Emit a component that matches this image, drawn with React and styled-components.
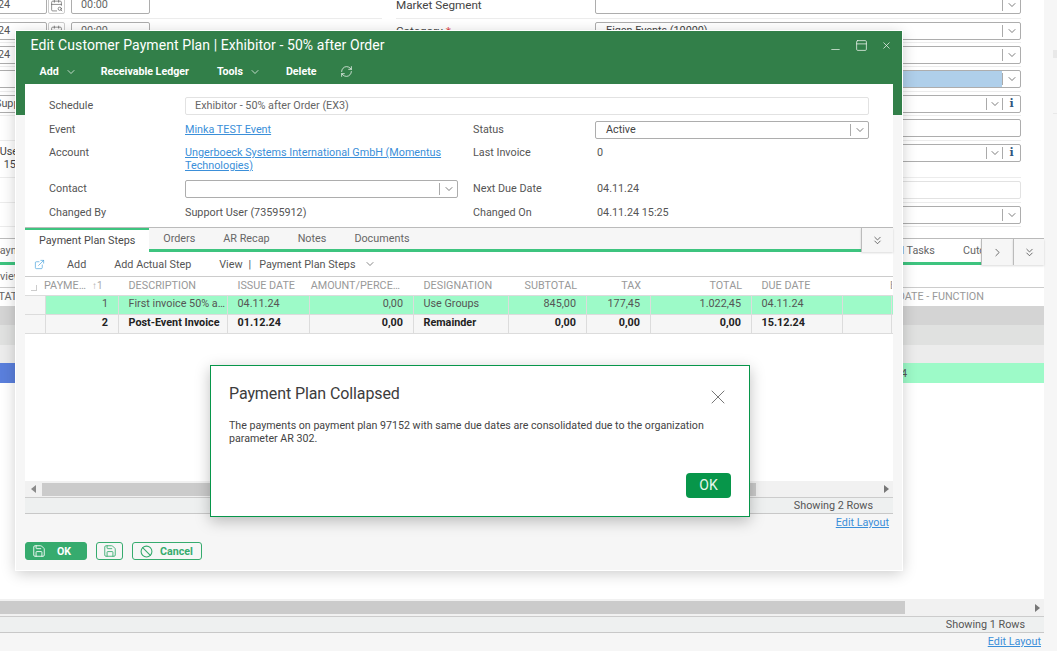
import React from 'react'
import styled, { createGlobalStyle } from 'styled-components'
import { Ban, CalendarSearch, ChevronDown, ChevronRight, ChevronsDown, ExternalLink, Minus, PanelTop, RefreshCw, Save, X } from 'lucide-react'

const GlobalStyle = createGlobalStyle`
  html, body { margin: 0; padding: 0; }
  body { font-family: Roboto, "Liberation Sans", sans-serif; font-size: 10.8px; color: #555; }
  * { box-sizing: border-box; }
`

const Page = styled.div`
  position: relative;
  width: 1057px;
  height: 651px;
  overflow: hidden;
  background: #f6f6f6;
`
const Main = styled.div`
  width: 1044px;
  height: 633px;
  background: #fff;
  display: flex;
  flex-direction: column;
`
const StripMark = styled.div`
  position: absolute;
  right: 0;
  top: ${p => p.$top}px;
  width: 4px;
  height: ${p => p.$h}px;
  background: #e8e8e8;
`
const Fields = styled.div`
  display: grid;
  grid-template-columns: 382px 625px;
  column-gap: 14px;
  margin-top: -7px;
`
const FieldCol = styled.div`
  display: flex;
  flex-direction: column;
`
const FieldRow = styled.div`
  display: flex;
  align-items: flex-start;
  height: ${p => p.$h}px;
  padding-top: 3px;
  border-bottom: 1px solid #ececec;
`
const FieldLabel = styled.div`
  width: 199px;
  flex: none;
  line-height: 18px;
  color: #444;
  font-size: 11.7px;
`
const Star = styled.span`
  color: #e04343;
  margin-left: 3px;
`
const Select = styled.div`
  flex: 1;
  height: 18px;
  display: flex;
  align-items: center;
  border: 1px solid ${p => (p.$muted ? '#e2e2e2' : '#adadad')};
  border-radius: 2px;
  background: #fff;
  color: #444;
  line-height: 16px;
`
const SelectValue = styled.div`
  flex: 1;
  align-self: stretch;
  padding-left: 10px;
  background: ${p => (p.$fill ? '#afcfea' : 'transparent')};
`
const SelectBtn = styled.div`
  width: ${p => p.$w || 18}px;
  height: 12px;
  flex: none;
  display: flex;
  align-items: center;
  justify-content: center;
  border-left: 1px solid #aaa;
  color: #444;
`
const InfoGlyph = styled.span`
  font-family: "DejaVu Serif", serif;
  font-weight: 700;
  font-size: 11px;
  line-height: 12px;
  color: #2e5680;
`
const DateBox = styled.div`
  width: 90px;
  margin-left: -43px;
  height: 18px;
  padding-left: 10px;
  border: 1px solid #adadad;
  border-radius: 2px;
  line-height: 16px;
  flex: none;
`
const CalBtn = styled.div`
  width: 17px;
  height: 18px;
  margin-left: 1px;
  border: 1px solid #ccc;
  border-radius: 2px;
  display: flex;
  align-items: center;
  justify-content: center;
  color: #555;
  flex: none;
`
const TimeBox = styled.div`
  width: 79px;
  height: 18px;
  margin-left: 6px;
  padding-left: 9px;
  border: 1px solid #adadad;
  border-radius: 2px;
  line-height: 16px;
  color: #666;
  flex: none;
`
const LeftBox = styled.div`
  width: 200px;
  height: 18px;
  margin-left: -16px;
  padding-left: 10px;
  border: 1px solid #adadad;
  border-radius: 2px;
  line-height: 16px;
  white-space: nowrap;
`
const LeftText = styled.div`
  margin-left: -45px;
  margin-top: 1px;
  line-height: 13px;
  white-space: nowrap;
  word-spacing: 4px;
  color: #444;
`
const BackTabs = styled.div`
  margin-top: 11px;
  height: 27px;
  display: flex;
  align-items: center;
  border-top: 1px solid #bbb;
`
const BackTabsBar = styled.div`
  flex: 1;
  height: 26px;
  display: flex;
  align-items: center;
  justify-content: space-between;
  border-bottom: 3px solid #3ec47f;
  overflow: hidden;
`
const BackTabText = styled.span`
  white-space: nowrap;
  margin-left: ${p => p.$ml || 0}px;
  color: #666;
`
const BackTabGroup = styled.div`
  display: flex;
  gap: 28px;
  margin-right: -12px;
`
const BackTabBtn = styled.div`
  width: ${p => p.$w}px;
  height: 26px;
  flex: none;
  display: flex;
  align-items: center;
  justify-content: center;
  background: #f6f6f6;
  border-left: 1px solid #bbb;
  box-shadow: 0 1px 2px rgba(0, 0, 0, 0.15);
  color: #444;
`
const BackTool = styled.div`
  height: 23px;
  display: flex;
  align-items: center;
  padding-left: 0;
  color: #666;
  border-bottom: 1px solid #ccc;
`
const BackToolText = styled.span`
  margin-left: -22px;
`
const BackHead = styled.div`
  height: 18px;
  display: flex;
  align-items: center;
  justify-content: space-between;
  color: #999;
  padding: 0 60px 2px 0;
`
const BackRow = styled.div`
  height: ${p => p.$h}px;
  background: ${p => p.$bg};
  display: flex;
  align-items: center;
`
const BackCell = styled.div`
  width: 15px;
  align-self: stretch;
  background: ${p => p.$bg};
`
const BackDate = styled.div`
  margin-left: 850px;
  white-space: nowrap;
  color: #555;
`
const Spacer = styled.div`
  flex: 1;
`
const ScrollTrack = styled.div`
  height: ${p => p.$h}px;
  display: flex;
  align-items: center;
  background: #f1f1f1;
  flex: none;
`
const ScrollThumb = styled.div`
  width: ${p => p.$w}px;
  height: 13px;
  margin-left: ${p => p.$ml || 0}px;
  background: #cbcbcb;
`
const ArrowLeft = styled.div`
  width: 0;
  height: 0;
  margin-left: 6px;
  border: 4px solid transparent;
  border-right: 5px solid #8a8a8a;
  border-left: 0;
`
const ArrowRight = styled.div`
  width: 0;
  height: 0;
  margin-left: auto;
  margin-right: ${p => p.$mr}px;
  border: 4px solid transparent;
  border-left: 5px solid #777;
  border-right: 0;
`
const GridFooter = styled.div`
  height: 17px;
  flex: none;
  display: flex;
  align-items: center;
  justify-content: flex-end;
  padding-right: ${p => p.$pr}px;
  background: #eef0f0;
  border-top: 1px solid #ccc;
  border-bottom: 1px solid #c8c8c8;
  color: #555;
`
const EditLink = styled.a`
  display: block;
  color: #3b8fd9;
  text-decoration: underline;
  text-align: right;
  line-height: 16px;
`
const PageLink = styled(EditLink)`
  width: 1041px;
  margin-top: 1px;
`
const Window = styled.div`
  position: absolute;
  left: 16px;
  top: 31px;
  width: 886px;
  height: 539px;
  display: flex;
  flex-direction: column;
  background: linear-gradient(#327f49 0 84px, #f6f6f6 84px);
  box-shadow: 0 0 0 1px #fff, 0 3px 14px rgba(0, 0, 0, 0.22);
`
const TitleBar = styled.div`
  height: 28px;
  flex: none;
  display: flex;
  align-items: center;
  padding: 0 10px 0 14.5px;
  color: #fff;
`
const Title = styled.div`
  flex: 1;
  font-size: 14px;
  letter-spacing: 0.08px;
`
const WinControls = styled.div`
  display: flex;
  align-items: center;
  gap: 13px;
  color: #f0f6f1;
`
const MinimizeIcon = styled(Minus)`
  margin-top: 9px;
`
const Toolbar = styled.div`
  height: 25px;
  flex: none;
  display: flex;
  align-items: center;
  padding-left: 23.5px;
  color: #fff;
  font-size: 10.67px;
`
const ToolItem = styled.div`
  display: flex;
  align-items: center;
  gap: ${p => p.$gap || 0}px;
  margin-right: ${p => p.$mr}px;
  font-weight: 700;
  white-space: nowrap;
`
const Panel = styled.div`
  height: 430px;
  flex: none;
  margin: 0 9px;
  display: flex;
  flex-direction: column;
  background: #fff;
`
const Form = styled.div`
  height: 143px;
  flex: none;
  padding: 13px 0 0 24px;
  display: grid;
  grid-template-columns: 136px 288px 122px 274px;
  grid-template-rows: 18px 18px 29px 18px 18px;
  row-gap: 6px;
  align-items: start;
  color: #555;
`
const Label = styled.div`
  line-height: ${p => p.$lh || 18}px;
  color: #555;
`
const Value = styled.div`
  line-height: ${p => p.$lh || 18}px;
  padding-left: ${p => p.$pl || 0}px;
`
const Link = styled.a`
  color: #3b8fd9;
  text-decoration: underline;
  line-height: 13px;
  display: block;
  margin-top: ${p => p.$mt || 0}px;
`
const WideInput = styled.div`
  grid-column: 2 / 5;
  height: 18px;
  padding-left: 9px;
  line-height: 16px;
  border: 1px solid #e2e2e2;
  border-radius: 2px;
  color: #666;
`
const ContactSelect = styled(Select)`
  width: 273px;
`
const Tabs = styled.div`
  height: 25px;
  flex: none;
  display: flex;
  background: #f6f6f6;
  border-top: 1px solid #bbb;
`
const Tab = styled.div`
  padding: 0 14px;
  line-height: 21px;
  white-space: nowrap;
  color: ${p => (p.$active ? '#4a4a4a' : '#666')};
  background: ${p => (p.$active ? '#fff' : 'transparent')};
  border-top: ${p => (p.$active ? '2px solid #3ec47f' : '0')};
  border-bottom: ${p => (p.$active ? '0' : '3px solid #3ec47f')};
`
const TabFill = styled.div`
  flex: 1;
  border-bottom: 3px solid #3ec47f;
`
const TabMore = styled.div`
  width: 32px;
  flex: none;
  display: flex;
  align-items: center;
  justify-content: center;
  border-left: 1px solid #bbb;
  box-shadow: 0 1px 2px rgba(0, 0, 0, 0.15);
  color: #444;
`
const GridTools = styled.div`
  height: 25px;
  flex: none;
  display: flex;
  align-items: center;
  padding-left: 9px;
  border-bottom: 1px solid #ccc;
  color: #555;
`
const GridTool = styled.span`
  margin-right: ${p => p.$mr}px;
  white-space: nowrap;
  color: ${p => (p.$link ? '#3b9bd9' : 'inherit')};
  display: flex;
  align-items: center;
`
const GridRow = styled.div`
  height: ${p => p.$h || 19}px;
  flex: none;
  display: grid;
  grid-template-columns: 18px 76px 109px 82px 104px 95px 78px 64px 101px 91px 49px;
  background: ${p => p.$bg || 'transparent'};
  font-weight: ${p => (p.$bold ? 700 : 400)};
  color: ${p => (p.$bold ? '#222' : '#555')};
  border-bottom: 1px solid #dcdcdc;
`
const Cell = styled.div`
  display: flex;
  align-items: center;
  justify-content: ${p => (p.$right ? 'flex-end' : 'flex-start')};
  padding: 0 ${p => p.$pr ?? 10}px 3px ${p => p.$pl ?? 9.5}px;
  white-space: nowrap;
  overflow: hidden;
  border-right: 1px solid #dcdcdc;
  background: ${p => p.$bg || 'transparent'};
`
const HeadCell = styled(Cell)`
  border-right: 0;
  color: #999;
  padding-bottom: 2px;
`
const CornerMark = styled.span`
  width: 6px;
  height: 6px;
  margin: 5px 0 0 6px;
  border-right: 1px solid #ccc;
  border-bottom: 1px solid #ccc;
`
const SortMark = styled.span`
  margin-left: 6px;
  color: #aaa;
  font-size: 10px;
`
const GridBody = styled.div`
  flex: 1;
`
const WinLink = styled(EditLink)`
  margin: 1px 0 0 9px;
  width: 864px;
`
const Buttons = styled.div`
  display: flex;
  gap: 9px;
  margin: 11px 0 0 9px;
`
const Button = styled.div`
  height: 18px;
  width: ${p => p.$w}px;
  display: flex;
  align-items: center;
  padding-left: ${p => p.$pl}px;
  gap: ${p => p.$gap || 0}px;
  border: 1px solid #36ab6e;
  border-radius: 3px;
  background: ${p => (p.$solid ? '#36ab6e' : 'transparent')};
  color: ${p => (p.$solid ? '#fff' : '#36ab6e')};
  font-weight: 700;
  font-size: 10.67px;
`
const Dialog = styled.div`
  position: absolute;
  left: 210px;
  top: 365px;
  width: 540px;
  height: 152px;
  display: flex;
  flex-direction: column;
  padding: 17px 18px 18px;
  background: #fff;
  border: 1px solid #07964a;
  box-shadow: 0 4px 14px rgba(0, 0, 0, 0.25);
`
const DialogHead = styled.div`
  height: 20px;
  display: flex;
  align-items: center;
  justify-content: space-between;
  flex: none;
`
const DialogTitle = styled.div`
  font-size: 16px;
  letter-spacing: -0.1px;
  color: #3c3c3c;
`
const DialogClose = styled.div`
  display: flex;
  margin: 8px 1px 0 0;
  color: #777;
`
const DialogText = styled.div`
  margin-top: 16px;
  font-size: 10.67px;
  line-height: 13px;
  color: #444;
  width: 490px;
`
const DialogOk = styled.div`
  margin: auto 0 0 auto;
  width: 45px;
  height: 25px;
  border-radius: 4px;
  background: #07964a;
  color: #e6f6ec;
  font-size: 14px;
  line-height: 24px;
  text-align: center;
`

const rightRows = [
  { h: 26, label: 'Market Segment', kind: 'select' },
  { h: 24, label: 'Category', required: true, value: 'Eigen Events (10000)', kind: 'select' },
  { h: 24, label: 'Sub Category', kind: 'select' },
  { h: 25, label: 'Status', kind: 'select', fill: true },
  { h: 24, label: 'Owner', kind: 'info' },
  { h: 25, label: 'Reference', kind: 'plain' },
  { h: 37, label: 'Contact', kind: 'info' },
  { h: 25, label: 'Changed By', kind: 'muted' },
  { h: 24, label: 'Type', kind: 'select' },
]

const leftRows = [
  { h: 26, kind: 'date' },
  { h: 24, kind: 'date' },
  { h: 24, kind: 'date' },
  { h: 25, kind: 'box', value: '' },
  { h: 24, kind: 'box', value: 'Support User' },
  { h: 25, kind: 'empty' },
  { h: 37, kind: 'text', lines: ['Support User (73595912)', '04.11.24 15:25'] },
  { h: 25, kind: 'empty' },
  { h: 24, kind: 'empty' },
]

const columns = [
  { label: 'DESCRIPTION' },
  { label: 'ISSUE DATE' },
  { label: 'AMOUNT/PERCE…', right: true, pr: 14 },
  { label: 'DESIGNATION' },
  { label: 'SUBTOTAL', right: true },
  { label: 'TAX', right: true },
  { label: 'TOTAL', right: true },
  { label: 'DUE DATE' },
]

const steps = [
  { no: 1, cells: ['First invoice 50% a…', '04.11.24', '0,00', 'Use Groups', '845,00', '177,45', '1.022,45', '04.11.24'], bg: '#9dfac8' },
  { no: 2, cells: ['Post-Event Invoice', '01.12.24', '0,00', 'Remainder', '0,00', '0,00', '0,00', '15.12.24'], bg: '#f6f6f6', bold: true },
]

const Chevron = () => <ChevronDown size={12} strokeWidth={1.4} />

const RightField = ({ row }) => (
  <FieldRow $h={row.h}>
    <FieldLabel>
      {row.label}
      {row.required && <Star>*</Star>}
    </FieldLabel>
    <Select $muted={row.kind === 'muted'}>
      <SelectValue $fill={row.fill}>{row.value}</SelectValue>
      {(row.kind === 'select' || row.kind === 'info') && (
        <SelectBtn $w={row.kind === 'info' ? 16 : 18}>
          <Chevron />
        </SelectBtn>
      )}
      {row.kind === 'info' && (
        <SelectBtn>
          <InfoGlyph>i</InfoGlyph>
        </SelectBtn>
      )}
    </Select>
  </FieldRow>
)

const LeftField = ({ row }) => (
  <FieldRow $h={row.h}>
    {row.kind === 'date' && (
      <>
        <DateBox>04.11.24</DateBox>
        <CalBtn>
          <CalendarSearch size={13} strokeWidth={1.2} />
        </CalBtn>
        <TimeBox>00:00</TimeBox>
      </>
    )}
    {row.kind === 'box' && <LeftBox>{row.value}</LeftBox>}
    {row.kind === 'text' && (
      <LeftText>
        {row.lines.map(line => (
          <div key={line}>{line}</div>
        ))}
      </LeftText>
    )}
  </FieldRow>
)

const App = () => {
  return (
    <Page>
      <GlobalStyle />
      <StripMark $top={50} $h={8} />
      <StripMark $top={113} $h={1} />
      <Main>
        <Fields>
          <FieldCol>
            {leftRows.map((row, i) => (
              <LeftField key={i} row={row} />
            ))}
          </FieldCol>
          <FieldCol>
            {rightRows.map(row => (
              <RightField key={row.label} row={row} />
            ))}
          </FieldCol>
        </Fields>
        <BackTabs>
          <BackTabsBar>
            <BackTabText $ml={-7}>Payment Plan Steps</BackTabText>
            <BackTabGroup>
              <BackTabText>All Tasks</BackTabText>
              <BackTabText>Cutoff</BackTabText>
            </BackTabGroup>
          </BackTabsBar>
          <BackTabBtn $w={32}>
            <ChevronRight size={13} strokeWidth={1.4} />
          </BackTabBtn>
          <BackTabBtn $w={31}>
            <ChevronsDown size={13} strokeWidth={1.4} />
          </BackTabBtn>
        </BackTabs>
        <BackTool>
          <BackToolText>Overview</BackToolText>
        </BackTool>
        <BackHead>
          <BackTabText $ml={-8}>STATUS</BackTabText>
          <span>DATE - FUNCTION</span>
        </BackHead>
        <BackRow $h={19} $bg="#d4d4d4" />
        <BackRow $h={20} $bg="#e0e1e0" />
        <BackRow $h={18} $bg="#ececec" />
        <BackRow $h={20} $bg="#9dfac8">
          <BackCell $bg="#5a7fdc" />
          <BackDate>04.11.24</BackDate>
        </BackRow>
        <Spacer />
        <ScrollTrack $h={17}>
          <ScrollThumb $w={905} />
          <ArrowRight $mr={4} />
        </ScrollTrack>
        <GridFooter $pr={19}>Showing 1 Rows</GridFooter>
      </Main>
      <PageLink>Edit Layout</PageLink>

      <Window>
        <TitleBar>
          <Title>Edit Customer Payment Plan | Exhibitor - 50% after Order</Title>
          <WinControls>
            <MinimizeIcon size={13} strokeWidth={1.3} />
            <PanelTop size={13} strokeWidth={1.4} />
            <X size={11} strokeWidth={1.6} />
          </WinControls>
        </TitleBar>
        <Toolbar>
          <ToolItem $mr={24} $gap={6}>
            Add <Chevron />
          </ToolItem>
          <ToolItem $mr={28}>Receivable Ledger</ToolItem>
          <ToolItem $mr={25} $gap={6}>
            Tools <Chevron />
          </ToolItem>
          <ToolItem $mr={23}>Delete</ToolItem>
          <RefreshCw size={13} strokeWidth={1.3} />
        </Toolbar>
        <Panel>
          <Form>
            <Label>Schedule</Label>
            <WideInput>Exhibitor - 50% after Order (EX3)</WideInput>
            <Label>Event</Label>
            <Value>
              <Link $mt={2}>Minka TEST Event</Link>
            </Value>
            <Label>Status</Label>
            <Select>
              <SelectValue>Active</SelectValue>
              <SelectBtn>
                <Chevron />
              </SelectBtn>
            </Select>
            <Label $lh={15}>Account</Label>
            <Value>
              <Link $mt={1}>Ungerboeck Systems International GmbH (Momentus Technologies)</Link>
            </Value>
            <Label $lh={15}>Last Invoice</Label>
            <Value $lh={15} $pl={2}>0</Value>
            <Label>Contact</Label>
            <ContactSelect>
              <SelectValue />
              <SelectBtn>
                <Chevron />
              </SelectBtn>
            </ContactSelect>
            <Label>Next Due Date</Label>
            <Value $pl={2}>04.11.24</Value>
            <Label>Changed By</Label>
            <Value>Support User (73595912)</Value>
            <Label>Changed On</Label>
            <Value $pl={2}>04.11.24 15:25</Value>
          </Form>
          <Tabs>
            <Tab $active>Payment Plan Steps</Tab>
            <Tab>Orders</Tab>
            <Tab>AR Recap</Tab>
            <Tab>Notes</Tab>
            <Tab>Documents</Tab>
            <TabFill />
            <TabMore>
              <ChevronsDown size={13} strokeWidth={1.4} />
            </TabMore>
          </Tabs>
          <GridTools>
            <GridTool $mr={22} $link>
              <ExternalLink size={11} strokeWidth={1.4} />
            </GridTool>
            <GridTool $mr={28}>Add</GridTool>
            <GridTool $mr={28}>Add Actual Step</GridTool>
            <GridTool $mr={6}>View</GridTool>
            <GridTool $mr={8}>|</GridTool>
            <GridTool $mr={8}>Payment Plan Steps</GridTool>
            <Chevron />
          </GridTools>
          <GridRow>
            <HeadCell $pl={0} $pr={0}>
              <CornerMark />
            </HeadCell>
            <HeadCell $pl={1} $pr={0}>
              PAYME…<SortMark>↑1</SortMark>
            </HeadCell>
            {columns.map(col => (
              <HeadCell key={col.label} $right={col.right} $pl={col.right ? 0 : 9.5} $pr={col.pr ?? 10}>
                {col.label}
              </HeadCell>
            ))}
            <HeadCell $pl={47} $pr={0}>B</HeadCell>
          </GridRow>
          {steps.map(step => (
            <GridRow key={step.no} $bg={step.bg} $bold={step.bold}>
              <Cell $bg="#f6f6f6" />
              <Cell $right>{step.no}</Cell>
              {step.cells.map((text, i) => (
                <Cell key={i} $right={columns[i].right} $pr={i === 0 ? 2 : 10}>
                  {text}
                </Cell>
              ))}
              <Cell />
            </GridRow>
          ))}
          <GridBody />
          <ScrollTrack $h={16}>
            <ArrowLeft />
            <ScrollThumb $w={714} $ml={6} />
            <ArrowRight $mr={4} />
          </ScrollTrack>
          <GridFooter $pr={20}>Showing 2 Rows</GridFooter>
        </Panel>
        <WinLink>Edit Layout</WinLink>
        <Buttons>
          <Button $w={62} $solid $pl={6} $gap={11}>
            <Save size={14} strokeWidth={1.5} /> OK
          </Button>
          <Button $w={27} $pl={6}>
            <Save size={14} strokeWidth={1.5} />
          </Button>
          <Button $w={70} $pl={7} $gap={7}>
            <Ban size={13} strokeWidth={2} /> Cancel
          </Button>
        </Buttons>
      </Window>

      <Dialog>
        <DialogHead>
          <DialogTitle>Payment Plan Collapsed</DialogTitle>
          <DialogClose>
            <X size={24} strokeWidth={1} />
          </DialogClose>
        </DialogHead>
        <DialogText>
          The payments on payment plan 97152 with same due dates are consolidated due to the organization parameter AR 302.
        </DialogText>
        <DialogOk>OK</DialogOk>
      </Dialog>
    </Page>
  )
}

export default App
